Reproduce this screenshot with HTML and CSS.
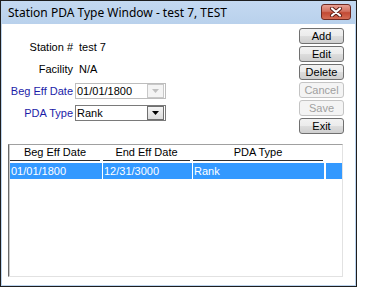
FILE: index.html
```html
<!DOCTYPE html>
<html lang="en">
<head>
    <meta charset="UTF-8">
    <title>Station PDA Type Window</title>
    <link rel="stylesheet" href="styles.css">
</head>
<body>
<div class="window">
    <div class="titlebar">
        <span class="title">Station PDA Type Window - test 7, TEST</span>
        <div class="close">
            <svg width="14" height="10" viewBox="0 0 14 10">
                <path d="M3 1.5 L11 8.5 M11 1.5 L3 8.5" stroke="#5a1c14" stroke-width="4" stroke-linecap="round"/>
                <path d="M3 1.5 L11 8.5 M11 1.5 L3 8.5" stroke="#fff" stroke-width="2.2" stroke-linecap="round"/>
            </svg>
        </div>
    </div>
    <div class="client">
        <div class="top">
            <div class="form">
                <span class="label">Station #</span>
                <span class="value">test 7</span>
                <span class="label">Facility</span>
                <span class="value">N/A</span>
                <span class="label blue">Beg Eff Date</span>
                <div class="combo disabled">
                    <span class="combo-text">01/01/1800</span>
                    <span class="arrow"><svg width="7" height="4" viewBox="0 0 7 4"><path d="M0 0 H7 L3.5 4 Z" fill="#c0c0c0"/></svg></span>
                </div>
                <span class="label blue">PDA Type</span>
                <div class="combo">
                    <span class="combo-text">Rank</span>
                    <span class="arrow"><svg width="7" height="4" viewBox="0 0 7 4"><path d="M0 0 H7 L3.5 4 Z" fill="#000"/></svg></span>
                </div>
            </div>
            <div class="buttons">
                <button class="btn">Add</button>
                <button class="btn">Edit</button>
                <button class="btn">Delete</button>
                <button class="btn" disabled>Cancel</button>
                <button class="btn" disabled>Save</button>
                <button class="btn">Exit</button>
            </div>
        </div>
        <div class="list">
            <div class="list-head">
                <span class="hcell c1">Beg Eff Date</span>
                <span class="hcell c2">End Eff Date</span>
                <span class="hcell c3">PDA Type</span>
            </div>
            <div class="list-row selected">
                <span class="cell c1">01/01/1800</span>
                <span class="cell c2">12/31/3000</span>
                <span class="cell c3">Rank</span>
                <span class="cell filler"></span>
            </div>
        </div>
    </div>
</div>
</body>
</html>
```
FILE: styles.css
```css
body {
    margin: 0;
    background: #fff;
    font-family: 'Liberation Sans', Arial, sans-serif;
    font-size: 11px;
    color: #000;
}

.window {
    width: 353px;
    height: 284px;
    border: 1px solid #1e1e1e;
    padding: 0 1px 1px 1px;
    background: #bcd4ee;
    display: flex;
    flex-direction: column;
}

.titlebar {
    height: 23px;
    display: flex;
    align-items: center;
    justify-content: space-between;
    padding: 0 4px 0 6px;
    background: linear-gradient(#c4d9f1, #b9d1ec);
}

.title {
    font-family: 'Noto Sans', 'Open Sans', sans-serif;
    font-size: 12px;
    color: #000;
}

.close {
    width: 28px;
    height: 14px;
    margin-top: -2px;
    border: 1px solid #6e2a22;
    border-radius: 3px;
    background: linear-gradient(#e8a093, #d1705f 45%, #c24a34 55%, #d46c55);
    display: flex;
    align-items: center;
    justify-content: center;
}

.client {
    flex: 1;
    background: #fff;
}

.top {
    display: flex;
    justify-content: space-between;
    height: 110px;
}

.form {
    padding-top: 12px;
    display: grid;
    grid-template-columns: 71px 100px;
    grid-auto-rows: 22px;
    column-gap: 2px;
    align-items: center;
}

.label {
    text-align: right;
}

.blue {
    color: #1c1ca8;
}

.value {
    padding-left: 4px;
}

.combo {
    width: 91px;
    height: 16px;
    box-sizing: border-box;
    border: 1px solid #7a7a7a;
    display: flex;
    align-items: center;
    justify-content: space-between;
    background: #fff;
}

.combo-text {
    padding-left: 1px;
}

.arrow {
    width: 15px;
    height: 12px;
    margin-right: 1px;
    border: 1px solid #6f6f6f;
    background: linear-gradient(#f4f4f4, #dcdcdc);
    display: flex;
    align-items: center;
    justify-content: center;
}

.combo.disabled {
    border-color: #bdbdbd;
}

.combo.disabled .arrow {
    border-color: #c8c8c8;
    background: #f4f4f4;
}

.buttons {
    margin: 4px 11px 0 0;
    display: flex;
    flex-direction: column;
    gap: 2px;
}

.btn {
    width: 45px;
    height: 16px;
    padding: 0;
    font-family: 'Liberation Sans', Arial, sans-serif;
    font-size: 11px;
    color: #000;
    border: 1px solid #707070;
    border-radius: 3px;
    background: linear-gradient(#f2f2f2, #ebebeb 50%, #dddddd 51%, #cfcfcf);
}

.btn:disabled {
    color: #a0a0a0;
    border-color: #c4c4c4;
    background: #f4f4f4;
}

.list {
    margin: 10px 0 0 6px;
    width: 335px;
    height: 133px;
    box-sizing: border-box;
    border-top: 1px solid #a0a0a0;
    border-left: 1px solid #6a6a6a;
    border-right: 1px solid #e2e2e2;
    border-bottom: 1px solid #e2e2e2;
    box-shadow: inset 1px 0 #c8c8c8;
}

.list-head {
    display: flex;
    gap: 3px;
    padding-left: 1px;
}

.hcell {
    height: 15px;
    line-height: 15px;
    text-align: center;
    border-bottom: 1px solid #303030;
}

.list-head .c1 { width: 90px; }
.list-head .c2 { width: 87px; }
.list-head .c3 { width: 130px; }

.list-row {
    margin-top: 2px;
    display: flex;
    gap: 1px;
    padding-left: 1px;
}

.cell {
    height: 16px;
    line-height: 16px;
    padding-left: 1px;
    box-sizing: border-box;
}

.selected .cell {
    background: #3399ff;
    color: #fff;
}

.list-row .c1 { width: 92px; }
.list-row .c2 { width: 89px; }
.list-row .c3 { width: 131px; }
.list-row .filler { width: 16px; margin-left: 1px; }
```
